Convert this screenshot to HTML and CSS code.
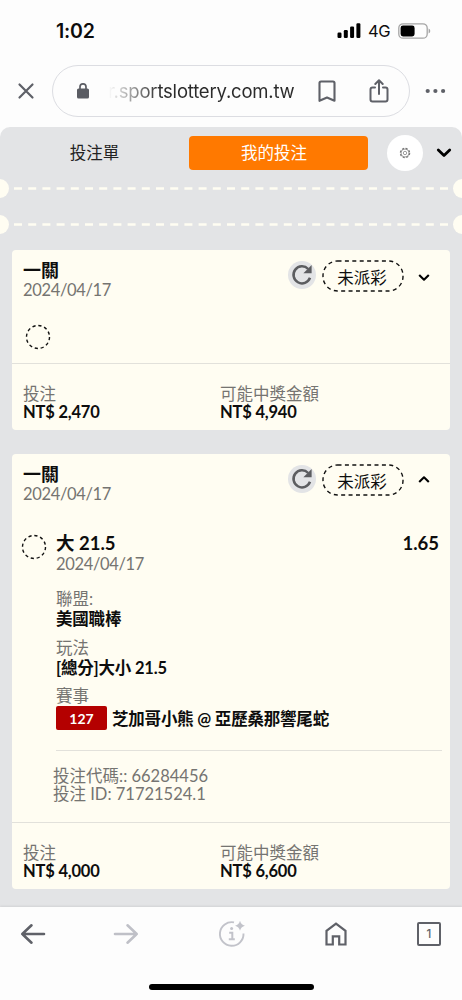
FILE: index.html
```html
<!DOCTYPE html>
<html lang="zh-Hant">
<head>
    <meta charset="UTF-8">
    <meta name="viewport" content="width=device-width, initial-scale=1.0">
    <title>我的投注</title>
    <link rel="stylesheet" href="styles.css">
</head>
<body>
    <div class="status-bar">
        <span class="time">1:02</span>
        <svg class="signal" width="24" height="16" viewBox="0 0 24 16">
            <rect x="0.5" y="9.5" width="4" height="5.5" rx="1.2"/>
            <rect x="6.8" y="7" width="4" height="8" rx="1.2"/>
            <rect x="13.1" y="3.5" width="4" height="11.5" rx="1.2"/>
            <rect x="19.4" y="0.3" width="4" height="14.7" rx="1.2"/>
        </svg>
        <span class="network">4G</span>
        <svg class="battery" width="33" height="16" viewBox="0 0 33 16">
            <rect x="0.8" y="0.8" width="28.4" height="14.4" rx="4.3" fill="none" stroke="#a5a5a5" stroke-width="1.3"/>
            <rect x="2.6" y="2.6" width="14" height="10.8" rx="2.4"/>
            <path d="M30.6 5.6v4.8q1.7-.6 1.7-2.4t-1.7-2.4z" fill="#a5a5a5"/>
        </svg>
    </div>

    <div class="browser-bar">
        <svg class="close" width="18" height="18" viewBox="0 0 18 18" fill="none" stroke="#5f6168" stroke-width="2.2" stroke-linecap="round">
            <path d="M2.5 2.5l13 13M15.5 2.5l-13 13"/>
        </svg>
        <div class="address">
            <svg class="lock" width="14" height="18" viewBox="0 0 14 18">
                <rect x="1" y="6.5" width="12" height="10" rx="1.6" fill="#5a5c63"/>
                <path d="M4 7V4.8a3 3 0 0 1 6 0V7" fill="none" stroke="#5a5c63" stroke-width="1.7"/>
            </svg>
            <span class="url">r.sportslottery.com.tw</span>
            <svg class="bookmark" width="18" height="23" viewBox="0 0 18 23" fill="none" stroke="#5f6168" stroke-width="2.1" stroke-linejoin="round">
                <path d="M1.5 3q0-1.500 1.500-1.500h12q1.500 0 1.500 1.500v17.800L9 17.500l-7.500 3.300z"/>
            </svg>
            <svg class="share" width="20" height="24" viewBox="0 0 20 24" fill="none" stroke="#5f6168" stroke-width="2" stroke-linecap="round" stroke-linejoin="round">
                <path d="M6 8.500H3.500q-2 0-2 2v10q0 2 2 2h13q2 0 2-2v-10q0-2-2-2H14M10 15V1.500M6.300 5L10 1.300 13.700 5"/>
            </svg>
        </div>
        <svg class="more" width="21" height="6" viewBox="0 0 21 6" fill="#5f6168">
            <circle cx="2.7" cy="3" r="2.1"/>
            <circle cx="10.4" cy="3" r="2.1"/>
            <circle cx="18.1" cy="3" r="2.1"/>
        </svg>
    </div>

    <div class="app">
        <div class="tabs">
            <div class="tab">投注單</div>
            <div class="tab active">我的投注</div>
            <div class="settings">
                <svg width="12" height="12" viewBox="0 0 12 12" fill="none" stroke="#777" stroke-width="0.7">
                    <circle cx="6" cy="6" r="4.7" stroke-width="1.1" stroke-dasharray="2.2 1.49"/>
                    <circle cx="6" cy="6" r="4"/>
                    <circle cx="6" cy="6" r="1.7"/>
                </svg>
            </div>
            <svg width="16" height="10" viewBox="0 0 16 10" fill="none" stroke="#000" stroke-width="2.8" stroke-linecap="round" stroke-linejoin="round">
                <path d="M2.3 2L8 7.5 13.7 2"/>
            </svg>
        </div>

        <div class="perforation">
            <span class="notch"></span>
            <svg class="dashes" width="434" height="3"><path d="M0 1.5H434" stroke="#fffdf2" stroke-width="2.6" stroke-dasharray="8 6.2"/></svg>
            <span class="notch"></span>
        </div>
        <div class="perforation">
            <span class="notch"></span>
            <svg class="dashes" width="434" height="3"><path d="M0 1.5H434" stroke="#fffdf2" stroke-width="2.6" stroke-dasharray="8 6.2"/></svg>
            <span class="notch"></span>
        </div>

        <div class="card">
            <div class="card-header">
                <div class="heading">
                    <div class="title">一關</div>
                    <div class="date">2024/04/17</div>
                </div>
                <div class="refresh">
                    <svg width="22" height="22" viewBox="0 0 22 22">
                        <path d="M19 13.8A8.5 8.5 0 1 1 17.2 5" fill="none" stroke="#5c5d60" stroke-width="2.5"/>
                        <path d="M20.6 1v8.200h-8.200z" fill="#5c5d60"/>
                    </svg>
                </div>
                <div class="state">
                    <svg width="82" height="32"><rect x="1" y="1" width="80" height="30" rx="14.5"/></svg>
                    <span>未派彩</span>
                </div>
                <svg class="toggle" width="12" height="9" viewBox="0 0 12 9"><path d="M1.2 2L6 6.7 10.8 2"/></svg>
            </div>
            <div class="card-empty">
                <svg class="ring" width="26" height="26"><circle cx="13" cy="13" r="11.5"/></svg>
            </div>
            <div class="card-footer">
                <div class="amount">
                    <div class="label">投注</div>
                    <div class="value">NT$ 2,470</div>
                </div>
                <div class="amount">
                    <div class="label">可能中獎金額</div>
                    <div class="value">NT$ 4,940</div>
                </div>
            </div>
        </div>

        <div class="card">
            <div class="card-header">
                <div class="heading">
                    <div class="title">一關</div>
                    <div class="date">2024/04/17</div>
                </div>
                <div class="refresh">
                    <svg width="22" height="22" viewBox="0 0 22 22">
                        <path d="M19 13.8A8.5 8.5 0 1 1 17.2 5" fill="none" stroke="#5c5d60" stroke-width="2.5"/>
                        <path d="M20.6 1v8.200h-8.200z" fill="#5c5d60"/>
                    </svg>
                </div>
                <div class="state">
                    <svg width="82" height="32"><rect x="1" y="1" width="80" height="30" rx="14.5"/></svg>
                    <span>未派彩</span>
                </div>
                <svg class="toggle up" width="12" height="9" viewBox="0 0 12 9"><path d="M1.2 7L6 2.3 10.8 7"/></svg>
            </div>
            <div class="bet">
                <svg class="ring" width="26" height="26"><circle cx="13" cy="13" r="11.5"/></svg>
                <div class="bet-body">
                    <div class="selection">
                        <span>大 21.5</span>
                        <span class="odds">1.65</span>
                    </div>
                    <div class="date">2024/04/17</div>
                    <div class="field">
                        <div class="label">聯盟:</div>
                        <div class="value">美國職棒</div>
                    </div>
                    <div class="field">
                        <div class="label">玩法</div>
                        <div class="value">[總分]大小 21.5</div>
                    </div>
                    <div class="field">
                        <div class="label">賽事</div>
                        <div class="match">
                            <span class="badge">127</span>
                            <span class="value">芝加哥小熊 @ 亞歷桑那響尾蛇</span>
                        </div>
                    </div>
                    <div class="codes">
                        <div>投注代碼:: 66284456</div>
                        <div>投注 ID: 71721524.1</div>
                    </div>
                </div>
            </div>
            <div class="card-footer">
                <div class="amount">
                    <div class="label">投注</div>
                    <div class="value">NT$ 4,000</div>
                </div>
                <div class="amount">
                    <div class="label">可能中獎金額</div>
                    <div class="value">NT$ 6,600</div>
                </div>
            </div>
        </div>
    </div>

    <div class="bottom-bar">
        <div class="nav">
            <svg width="26" height="22" viewBox="0 0 26 22" fill="none" stroke="#5f6168" stroke-width="2.6" stroke-linecap="round" stroke-linejoin="round">
                <path d="M24 11H2.3M11.5 2.3L2.3 11l9.2 8.7"/>
            </svg>
            <svg class="forward" width="26" height="22" viewBox="0 0 26 22" fill="none" stroke="#bfc0c7" stroke-width="2.6" stroke-linecap="round" stroke-linejoin="round">
                <path d="M2 11h21.700M14.500 2.300L23.700 11l-9.200 8.700"/>
            </svg>
            <svg class="info" width="28" height="28" viewBox="0 0 28 28">
                <path d="M16 2.400A11.800 11.800 0 1 0 25.500 13.500" fill="none" stroke="#c2c3ca" stroke-width="1.900"/>
                <path d="M22 0.800q.9 4.100 5 5-4.100.9-5 5-.9-4.100-5-5 4.100-.9 5-5z" fill="#c2c3ca"/>
                <path d="M11.200 12.800h3.100v5.900M10.800 19.300h6" fill="none" stroke="#c2c3ca" stroke-width="2"/>
                <circle cx="13.600" cy="8.500" r="1.500" fill="#c2c3ca"/>
            </svg>
            <svg class="home" width="22" height="24" viewBox="0 0 22 24" fill="none" stroke="#5f6168" stroke-width="2.2">
                <path d="M1.500 22.500V8.800L11 1.700l9.500 7.100v13.700h-6.300v-8.200H7.800v8.200z"/>
            </svg>
            <span class="tab-count">1</span>
        </div>
        <div class="home-indicator"></div>
    </div>
</body>
</html>
```

FILE: styles.css
```css
* {
    box-sizing: border-box;
}
body {
    margin: 0;
    width: 462px;
    height: 1000px;
    overflow: hidden;
    background-color: #fdfdfd;
    color: #0d0d0d;
    font-family: Lato, "Noto Sans CJK TC", sans-serif;
    font-size: 16.5px;
}
svg {
    display: block;
    flex-shrink: 0;
}

/* iOS status bar */
.status-bar {
    display: flex;
    align-items: center;
    height: 62px;
    padding: 0 2px 0 56px;
    font-family: Inter, sans-serif;
}
.time {
    width: 281px;
    font-size: 19.5px;
    font-weight: 600;
    letter-spacing: -0.2px;
}
.network {
    width: 30px;
    margin-left: 7px;
    font-size: 16.5px;
    letter-spacing: -0.3px;
}

/* Browser address bar */
.browser-bar {
    display: flex;
    align-items: center;
    height: 65px;
    padding: 3px 0 10px 17px;
}
.address {
    display: flex;
    align-items: center;
    width: 358px;
    height: 52px;
    margin: 0 15px 0 17px;
    padding-left: 23px;
    border: 1px solid #dcdde2;
    border-radius: 26px;
}
.url {
    width: 192px;
    margin-left: 18px;
    font-family: Inter, sans-serif;
    font-size: 18.5px;
    letter-spacing: -0.2px;
    white-space: nowrap;
    background: linear-gradient(to right, #fff 0, #2b2b2b 52px);
    background-clip: text;
    -webkit-background-clip: text;
    color: transparent;
}
.bookmark {
    margin-left: 18px;
}
.share {
    margin-left: 33px;
}

/* Bet slip */
.app {
    height: 780px;
    background-color: #e3e4e6;
    border-radius: 10px 10px 0 0;
}
.tabs {
    display: flex;
    align-items: center;
    height: 52px;
}
.tab {
    width: 189px;
    height: 34px;
    line-height: 34px;
    text-align: center;
    color: #222;
}
.tab.active {
    width: 179px;
    padding-right: 9px;
    border-radius: 4px;
    background-color: #ff7900;
    color: #fff;
}
.settings {
    display: flex;
    align-items: center;
    justify-content: center;
    width: 36px;
    height: 36px;
    margin: 0 13px 0 19px;
    border-radius: 50%;
    background-color: #fff;
}
.perforation {
    display: flex;
    align-items: center;
    justify-content: space-between;
    height: 19px;
    margin-bottom: 16.5px;
    overflow: hidden;
}
.notch {
    flex-shrink: 0;
    width: 19px;
    height: 19px;
    margin: 0 -10px;
    border-radius: 50%;
    background-color: #fffdf2;
}

.card {
    margin: 0 12px 24px;
    border-radius: 4px;
    background-color: #fffdf2;
}
.card-header {
    display: flex;
    height: 60px;
    padding: 10px 0 0 11px;
}
.heading {
    width: 265px;
}
.title {
    height: 20px;
    line-height: 20px;
    font-size: 18px;
    font-weight: 700;
}
.date {
    height: 18px;
    line-height: 20px;
    letter-spacing: -0.35px;
    color: #757471;
}
.refresh {
    display: flex;
    align-items: center;
    justify-content: center;
    width: 28px;
    height: 28px;
    margin-top: 1px;
    border-radius: 50%;
    background-color: #e3e4e6;
}
.state {
    display: grid;
    width: 82px;
    height: 32px;
    margin-left: 6px;
    place-items: center;
}
.state svg,
.state span {
    grid-area: 1 / 1;
}
.state span {
    margin: 1px 2px 0 0;
}
.state rect,
.ring circle {
    fill: none;
    stroke: #111;
    stroke-width: 1.4;
    stroke-dasharray: 4 3.4;
}
.ring circle {
    stroke-dasharray: 3.2 2.82;
}
.toggle {
    margin: 13px 0 0 14px;
    fill: none;
    stroke: #000;
    stroke-width: 2.1;
    stroke-linejoin: round;
}
.toggle.up {
    margin-top: 11px;
}
.card-empty {
    height: 53px;
    padding: 14px 0 0 13px;
}
.card-footer {
    display: flex;
    height: 67px;
    padding: 21px 0 0 11px;
    border-top: 1px solid #e2e1db;
}
.amount {
    width: 197px;
}
.label {
    height: 18px;
    line-height: 18px;
    color: #757471;
}
.value {
    height: 18px;
    line-height: 18px;
    font-weight: 700;
    letter-spacing: -0.2px;
}

.bet {
    display: flex;
    height: 308px;
    padding: 19px 8px 0 9px;
}
.bet .ring {
    margin: 1px 9px 0 0;
}
.bet-body {
    flex: 1;
}
.selection {
    display: flex;
    justify-content: space-between;
    height: 21px;
    padding-right: 3px;
    line-height: 21px;
    font-size: 18.5px;
    font-weight: 700;
}
.field {
    height: 48.5px;
}
.date + .field {
    margin-top: 18px;
}
.field .value {
    line-height: 22px;
}
.match {
    display: flex;
    gap: 5px;
    margin-top: 1px;
}
.match .value {
    margin-top: 2px;
}
.badge {
    width: 51px;
    height: 24px;
    border-radius: 2px;
    background-color: #b40000;
    color: #fff;
    font-size: 14px;
    font-weight: 700;
    line-height: 25px;
    text-align: center;
}
.codes {
    margin-top: 14px;
    padding-top: 16px;
    border-top: 1px solid #e2e1db;
    line-height: 18px;
    color: #757471;
}
.codes div {
    height: 18px;
    margin-left: -3px;
}

/* Browser bottom bar */
.bottom-bar {
    position: relative;
    height: 93px;
    background-color: #fdfdfd;
    box-shadow: 0 -1px 2px rgba(0, 0, 0, 0.08);
}
.nav {
    display: flex;
    align-items: center;
    height: 53px;
    padding-left: 20px;
}
.forward {
    margin-left: 67px;
}
.info {
    margin: 0 79px 0 79px;
}
.tab-count {
    width: 24px;
    height: 24px;
    margin-left: 70px;
    border: 2px solid #5f6168;
    border-radius: 2px;
    font-family: Inter, sans-serif;
    font-size: 11.5px;
    font-weight: 500;
    line-height: 20px;
    text-align: center;
    color: #5f6168;
}
.home-indicator {
    width: 165px;
    height: 6px;
    margin: 24px auto 0;
    border-radius: 3px;
    background-color: #000;
}
```
